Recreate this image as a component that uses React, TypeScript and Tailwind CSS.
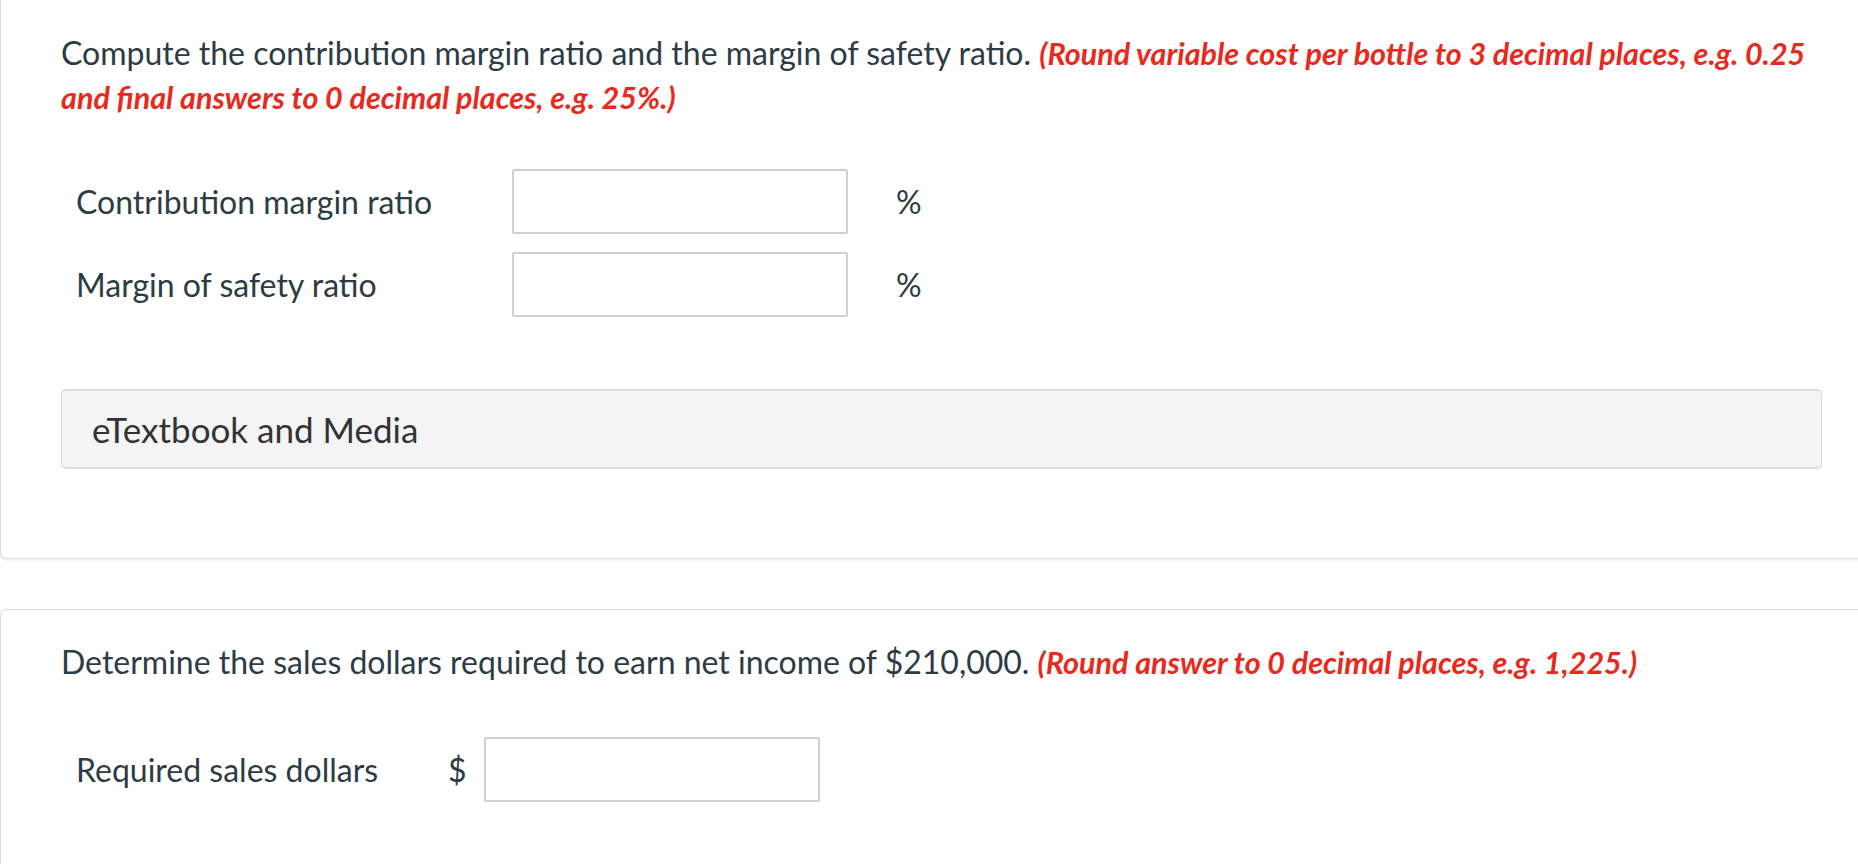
const font = { fontFamily: "Lato, 'Open Sans', sans-serif" };

function AnswerInput() {
  return (
    <input
      type="text"
      className="h-[65px] w-[336px] rounded-[2px] border-2 border-[#d0d0d0] bg-white px-3 text-[30px] text-[#2d3b45] outline-none"
    />
  );
}

export default function App() {
  return (
    <div className="h-screen overflow-hidden bg-white text-[#2d3b45]" style={font}>
      {/* Question part 1 */}
      <div className="mr-[-24px] rounded-b-md border-x border-b border-[#dcdcdc] pb-[89px] pl-[60px] pr-[60px] pt-[31px] shadow-[0_2px_3px_rgba(0,0,0,0.06)]">
        <p className="w-[1785px] text-[32px] leading-[43px]">
          Compute the contribution margin ratio and the margin of safety ratio.{" "}
          <span className="text-[30.5px] font-bold italic text-[#e8291c]">
            (Round variable cost per bottle to 3 decimal places, e.g. 0.25 and final answers to 0
            decimal places, e.g. 25%.)
          </span>
        </p>

        <div className="mt-[50px] flex flex-col gap-[18px] pl-[15px]">
          <div className="flex items-center">
            <span className="w-[436px] text-[32px]">Contribution margin ratio</span>
            <AnswerInput />
            <span className="ml-[48px] text-[32px]">%</span>
          </div>
          <div className="flex items-center">
            <span className="w-[436px] text-[32px]">Margin of safety ratio</span>
            <AnswerInput />
            <span className="ml-[48px] text-[32px]">%</span>
          </div>
        </div>

        {/* eTextbook and Media */}
        <div className="mt-[72px] flex h-[80px] w-[1761px] items-center rounded-[5px] border border-y-2 border-[#dcdcdc] bg-[#f4f4f4] pl-[30px]">
          <span className="text-[35px] text-[#333]">eTextbook and Media</span>
        </div>
      </div>

      {/* Question part 2 */}
      <div className="mr-[-24px] mt-[50px] rounded-md border border-[#dcdcdc] pb-[160px] pl-[60px] pt-[30px]">
        <p className="text-[32px] leading-[43px]">
          Determine the sales dollars required to earn net income of $210,000.{" "}
          <span className="text-[30.5px] font-bold italic text-[#e8291c]">
            (Round answer to 0 decimal places, e.g. 1,225.)
          </span>
        </p>

        <div className="mt-[53px] flex items-center pl-[15px]">
          <span className="w-[372px] text-[32px]">Required sales dollars</span>
          <span className="w-[36px] text-[32px]">$</span>
          <AnswerInput />
        </div>
      </div>
    </div>
  );
}
